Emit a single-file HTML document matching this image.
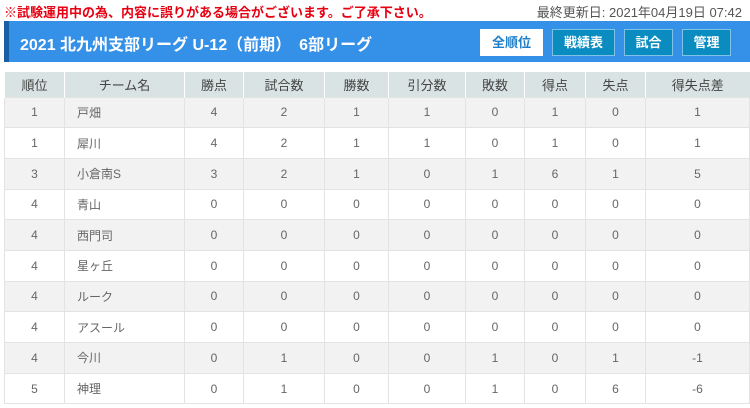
<!DOCTYPE html>
<html><head><meta charset="utf-8"><style>
*{margin:0;padding:0;box-sizing:border-box}
body{width:750px;height:408px;background:#fff;font-family:"Liberation Sans","Noto Sans CJK JP",sans-serif;position:relative;overflow:hidden}
.note{position:absolute;left:4px;top:2px;color:#e60012;font-size:13px;font-weight:bold}
.upd{position:absolute;right:8px;top:2px;color:#555;font-size:13px}
.bar{position:absolute;left:4px;top:21px;width:746px;height:41px;background:#3590e8;border-left:5px solid #1a5fa6}
.bar .t{position:absolute;left:11px;top:10px;color:#fff;font-size:16px;font-weight:bold}
.btn{position:absolute;top:8px;height:27px;background:#0b8cc0;border:1px solid #7cc3e6;color:#fff;font-size:13px;font-weight:bold;text-align:center;line-height:25px}
.btn.w{background:#fff;color:#1e7ec8;border-color:#fff}
table{position:absolute;left:4px;top:72px;width:746px;border-collapse:collapse;font-size:12px;color:#666}
th{background:#d9e3e3;height:25px;font-weight:normal;color:#444;font-size:13px;border-left:1px solid #fff}
td{height:30.7px;text-align:center;border:1px solid #e3e3e3}
tr:nth-child(odd) td{background:#f2f2f2}
td.n{text-align:left;padding-left:12px}
</style></head><body>
<div class="note">※試験運用中の為、内容に誤りがある場合がございます。ご了承下さい。</div>
<div class="upd">最終更新日: 2021年04月19日 07:42</div>
<div class="bar"><div class="t">2021 北九州支部リーグ U-12（前期）　6部リーグ</div>
<div class="btn w" style="left:471px;width:63px">全順位</div>
<div class="btn" style="left:543px;width:63px">戦績表</div>
<div class="btn" style="left:615px;width:49px">試合</div>
<div class="btn" style="left:673px;width:49px">管理</div>
</div>
<table>
<colgroup><col style="width:60px"><col style="width:120px"><col style="width:59px"><col style="width:81px"><col style="width:64px"><col style="width:77px"><col style="width:59px"><col style="width:61px"><col style="width:60px"><col></colgroup>
<thead><tr><th>順位</th><th>チーム名</th><th>勝点</th><th>試合数</th><th>勝数</th><th>引分数</th><th>敗数</th><th>得点</th><th>失点</th><th>得失点差</th></tr></thead>
<tbody>
<tr><td>1</td><td class="n">戸畑</td><td>4</td><td>2</td><td>1</td><td>1</td><td>0</td><td>1</td><td>0</td><td>1</td></tr>
<tr><td>1</td><td class="n">犀川</td><td>4</td><td>2</td><td>1</td><td>1</td><td>0</td><td>1</td><td>0</td><td>1</td></tr>
<tr><td>3</td><td class="n">小倉南S</td><td>3</td><td>2</td><td>1</td><td>0</td><td>1</td><td>6</td><td>1</td><td>5</td></tr>
<tr><td>4</td><td class="n">青山</td><td>0</td><td>0</td><td>0</td><td>0</td><td>0</td><td>0</td><td>0</td><td>0</td></tr>
<tr><td>4</td><td class="n">西門司</td><td>0</td><td>0</td><td>0</td><td>0</td><td>0</td><td>0</td><td>0</td><td>0</td></tr>
<tr><td>4</td><td class="n">星ヶ丘</td><td>0</td><td>0</td><td>0</td><td>0</td><td>0</td><td>0</td><td>0</td><td>0</td></tr>
<tr><td>4</td><td class="n">ルーク</td><td>0</td><td>0</td><td>0</td><td>0</td><td>0</td><td>0</td><td>0</td><td>0</td></tr>
<tr><td>4</td><td class="n">アスール</td><td>0</td><td>0</td><td>0</td><td>0</td><td>0</td><td>0</td><td>0</td><td>0</td></tr>
<tr><td>4</td><td class="n">今川</td><td>0</td><td>1</td><td>0</td><td>0</td><td>1</td><td>0</td><td>1</td><td>-1</td></tr>
<tr><td>5</td><td class="n">神理</td><td>0</td><td>1</td><td>0</td><td>0</td><td>1</td><td>0</td><td>6</td><td>-6</td></tr>
</tbody></table>
</body></html>
